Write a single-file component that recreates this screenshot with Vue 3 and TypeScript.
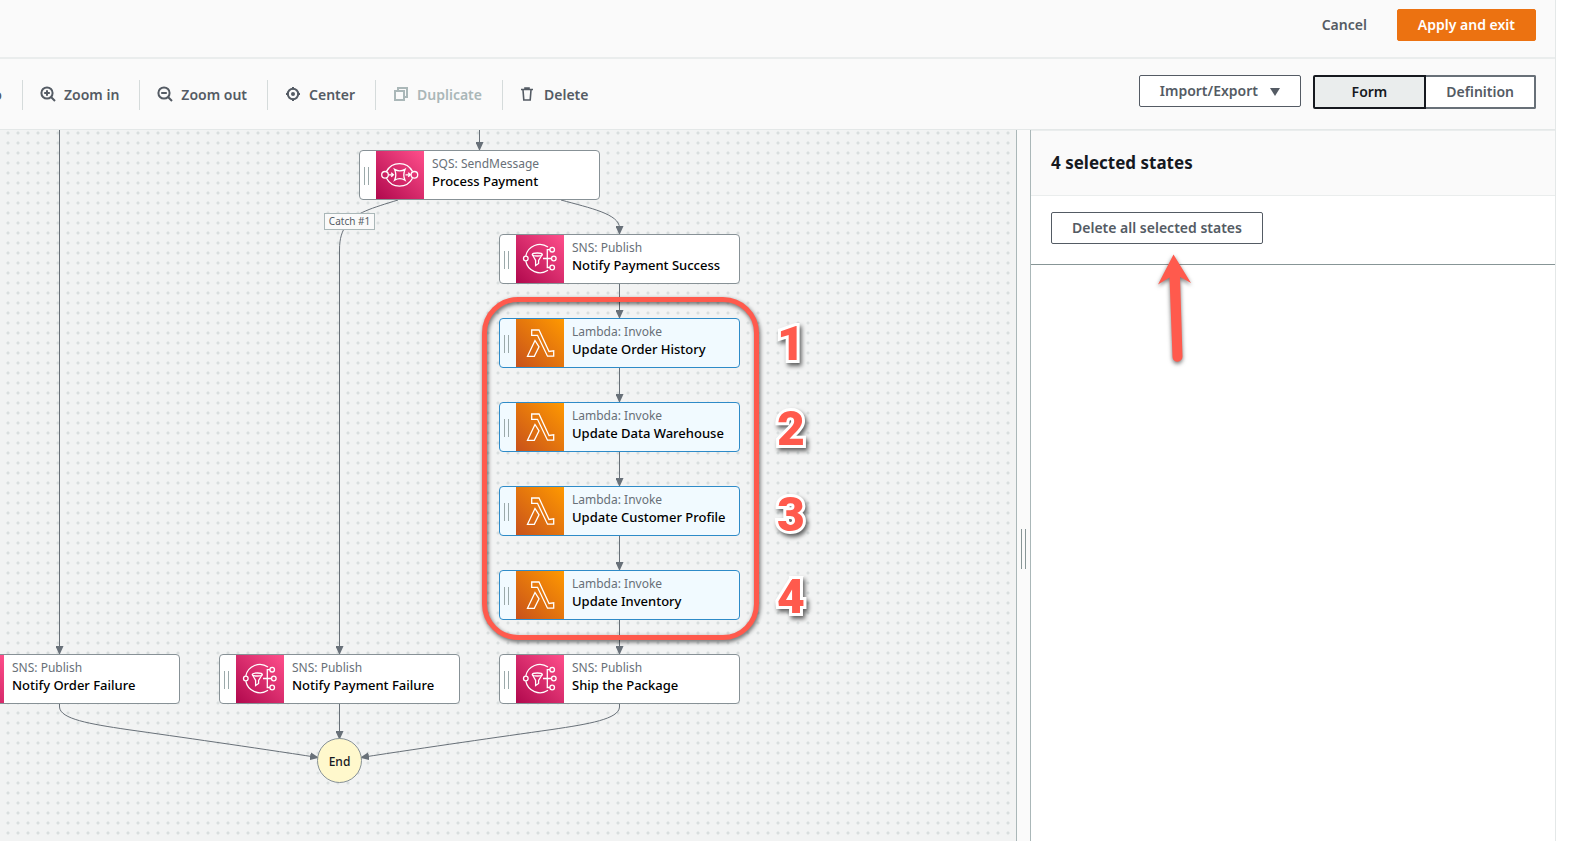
<script setup lang="ts">
type Service = 'sqs' | 'sns' | 'lambda'

interface StateNode {
  id: string
  service: Service
  action: string
  name: string
  x: number
  y: number
  selected?: boolean
}

const nodes: StateNode[] = [
  { id: 'pay', service: 'sqs', action: 'SQS: SendMessage', name: 'Process Payment', x: 359, y: 20 },
  { id: 'paid', service: 'sns', action: 'SNS: Publish', name: 'Notify Payment Success', x: 499, y: 104 },
  { id: 'history', service: 'lambda', action: 'Lambda: Invoke', name: 'Update Order History', x: 499, y: 188, selected: true },
  { id: 'warehouse', service: 'lambda', action: 'Lambda: Invoke', name: 'Update Data Warehouse', x: 499, y: 272, selected: true },
  { id: 'profile', service: 'lambda', action: 'Lambda: Invoke', name: 'Update Customer Profile', x: 499, y: 356, selected: true },
  { id: 'inventory', service: 'lambda', action: 'Lambda: Invoke', name: 'Update Inventory', x: 499, y: 440, selected: true },
  { id: 'ship', service: 'sns', action: 'SNS: Publish', name: 'Ship the Package', x: 499, y: 524 },
  { id: 'payfail', service: 'sns', action: 'SNS: Publish', name: 'Notify Payment Failure', x: 219, y: 524 },
  { id: 'orderfail', service: 'sns', action: 'SNS: Publish', name: 'Notify Order Failure', x: -61, y: 524 },
]

const edges: string[] = [
  'M59.5 0V524',
  'M479.5 0V20',
  'M398 70C372 78 355 83 347 94C342 101 339.5 108 339.5 120V524',
  'M561 70C590 78 619.5 84 619.5 98V104',
  'M619.5 154V188',
  'M619.5 238V272',
  'M619.5 322V356',
  'M619.5 406V440',
  'M619.5 490V524',
  'M339.5 574V609',
  'M59.5 574V577C60 589 90 594 127 599.5C180 607 250 617 318 627.5',
  'M619.5 574V577C619 589 589 594 552 599.5C499 607 429 617 361 627.5',
]

const callouts = [
  { label: '1', x: 777, y: 186 },
  { label: '2', x: 777, y: 271 },
  { label: '3', x: 777, y: 357 },
  { label: '4', x: 777, y: 439 },
]
</script>

<template>
  <div class="app">
    <div class="studio">
      <header class="header">
        <button class="btn link" type="button">Cancel</button>
        <button class="btn primary" type="button">Apply and exit</button>
      </header>

      <div class="toolbar">
        <div class="tools">
          <div class="clipped"><button class="tool-text" type="button">Redo</button></div>
          <button class="tool" type="button">
            <svg class="glyph" viewBox="0 0 16 16"><circle cx="7" cy="7" r="5.6" /><path d="M11 11l4 4M7 4.200v5.600M4.200 7h5.600" /></svg>
            Zoom in
          </button>
          <button class="tool" type="button">
            <svg class="glyph" viewBox="0 0 16 16"><circle cx="7" cy="7" r="5.6" /><path d="M11 11l4 4M4.200 7h5.600" /></svg>
            Zoom out
          </button>
          <button class="tool" type="button">
            <svg class="glyph" viewBox="0 0 16 16"><circle cx="8" cy="8" r="5.2" /><circle class="dot" cx="8" cy="8" r="2" /><path d="M8 1v2.500M8 12.500V15M1 8h2.500M12.500 8H15" /></svg>
            Center
          </button>
          <button class="tool" type="button" disabled>
            <svg class="glyph" viewBox="0 0 16 16"><path d="M2 5h9v9H2zM5 5V2h9v9h-3" /></svg>
            Duplicate
          </button>
          <button class="tool" type="button">
            <svg class="glyph thin" viewBox="0 0 16 16"><path d="M1 3.500h12M5 3V2h4v1M3 4l.8 10h6.400L11 4" /></svg>
            Delete
          </button>
        </div>
        <div class="views">
          <button class="btn normal" type="button">
            Import/Export
            <svg class="caret" viewBox="0 0 10 8"><path d="M0 0h10L5 8z" /></svg>
          </button>
          <div class="segments">
            <button class="segment active" type="button" aria-pressed="true">Form</button>
            <button class="segment" type="button" aria-pressed="false">Definition</button>
          </div>
        </div>
      </div>

      <div class="workspace">
        <main class="canvas">
          <svg class="edges">
            <defs>
              <marker id="arrow" markerWidth="10" markerHeight="8" refX="8" refY="4" orient="auto" markerUnits="userSpaceOnUse">
                <path d="M0 0L9 4L0 8z" fill="#687078" />
              </marker>
            </defs>
            <path v-for="d in edges" :key="d" :d="d" marker-end="url(#arrow)" />
          </svg>

          <div
            v-for="n in nodes"
            :key="n.id"
            class="node"
            :class="{ selected: n.selected }"
            :style="{ left: n.x + 'px', top: n.y + 'px' }"
          >
            <span class="grip"></span>
            <span class="service" :class="n.service">
              <svg v-if="n.service === 'lambda'" viewBox="0 0 48 48">
                <path d="M15.700 11H23L33 32.500l4.700-.7v5.400H31.500L21.500 16.300h-5.800zM19 21.500L11.500 37.300h6.800L23 27.800z" />
              </svg>
              <svg v-else-if="n.service === 'sns'" viewBox="0 0 48 48">
                <path d="M9.800 20.800A14.400 14.400 0 0 1 32 12M9.800 26.200A14.400 14.400 0 0 0 32 35.300" />
                <circle cx="9.800" cy="23.500" r="2.300" />
                <circle cx="36.200" cy="14.700" r="2.300" />
                <circle cx="37.800" cy="23.500" r="2.300" />
                <circle cx="36.200" cy="32.500" r="2.300" />
                <path d="M33.900 14.700h-2.600v17.800h2.600M27 23.500h8.500" />
                <ellipse cx="21.300" cy="19.500" rx="5" ry="1.500" />
                <path d="M16.300 19.500l3.300 6v5l3-2v-3l3.700-6" />
              </svg>
              <svg v-else viewBox="0 0 48 48">
                <path d="M10.500 20.400A14.700 14.700 0 0 1 36.500 20.400M10.500 27.200A14.700 14.700 0 0 0 36.500 27.200" />
                <circle cx="9" cy="23.800" r="3.300" />
                <circle cx="38.400" cy="23.800" r="3.300" />
                <path d="M18.600 18.400q5.200 3 10.400 0q-2.400 5.400 0 10.800q-5.200-3-10.400 0q2.400-5.400 0-10.800z" />
                <path d="M12.500 23.800h4.500M15.200 21.800l2.200 2l-2.200 2M29.500 23.800h4.500M32.200 21.800l2.200 2l-2.200 2" />
              </svg>
            </span>
            <span class="text">
              <span class="action">{{ n.action }}</span>
              <span class="name">{{ n.name }}</span>
            </span>
          </div>

          <span class="catch">Catch #1</span>
          <span class="end">End</span>
          <span class="highlight"></span>
          <span
            v-for="c in callouts"
            :key="c.label"
            class="callout"
            :style="{ left: c.x + 'px', top: c.y + 'px' }"
          >{{ c.label }}</span>
        </main>

        <div class="splitter"><span class="splitter-grip"></span></div>

        <aside class="panel">
          <div class="panel-head"><h2>4 selected states</h2></div>
          <div class="panel-body">
            <button class="btn normal" type="button">Delete all selected states</button>
          </div>
          <svg class="pointer" viewBox="0 0 48 124">
            <path d="M18.500 4.500L36 33L25 27L27.500 106.500a5 5 0 0 1-10 .4L14.500 27.500L3 34.500z" />
          </svg>
        </aside>
      </div>
    </div>
  </div>
</template>

<style>
body {
  margin: 0;
  background: #fff;
}
</style>

<style scoped>
.app {
  box-sizing: border-box;
  height: 100vh;
  padding-right: 24px;
  font-family: "Noto Sans", "Open Sans", sans-serif;
  font-size: 14px;
  color: #16191f;
  overflow: hidden;
}
.studio {
  display: flex;
  flex-direction: column;
  height: 100%;
  border-right: 1px solid #e4e8e8;
}
button {
  font: inherit;
  font-weight: 600;
  color: #545b64;
  background: none;
  border: 0;
  margin: 0;
  padding: 0;
  white-space: nowrap;
}
.header {
  display: flex;
  justify-content: flex-end;
  padding: 9px 19px 16px 0;
  background: #fafafa;
  border-bottom: 2px solid #eaeded;
}
.btn {
  box-sizing: border-box;
  height: 32px;
  padding: 0 20px;
  border: 1px solid transparent;
  border-radius: 2px;
  line-height: 20px;
}
.link {
  padding: 0 29px;
}
.primary {
  background: #ec7211;
  border-color: #ec7211;
  color: #fff;
}
.normal {
  background: #fff;
  border-color: #545b64;
}
.toolbar {
  display: flex;
  justify-content: space-between;
  align-items: flex-start;
  height: 70px;
  padding-right: 19px;
  background: #fafafa;
  border-bottom: 1px solid #e4e8e8;
}
.tools {
  display: flex;
  margin-top: 21px;
}
.clipped {
  display: flex;
  justify-content: flex-end;
  width: 22px;
  overflow: hidden;
}
.tool-text {
  padding: 0 20px 2px 0;
}
.tool {
  box-sizing: border-box;
  display: flex;
  align-items: center;
  gap: 8px;
  height: 30px;
  padding: 0 20px 2px 17px;
  border-left: 1px solid #d5dbdb;
}
.tool:disabled {
  color: #aab7b8;
}
.glyph {
  width: 16px;
  height: 16px;
  fill: none;
  stroke: currentColor;
  stroke-width: 2;
}
.glyph.thin {
  stroke-width: 1.6;
}
.glyph .dot {
  fill: currentColor;
  stroke: none;
}
.views {
  display: flex;
  gap: 12px;
  margin-top: 16px;
}
.caret {
  width: 10px;
  height: 8px;
  margin-left: 8px;
  fill: #545b64;
}
.segments {
  display: flex;
}
.segment {
  box-sizing: border-box;
  height: 34px;
  padding: 0 20px 2px;
  background: #fff;
  border: 2px solid #687078;
  border-left: 0;
  border-radius: 0 2px 2px 0;
}
.segment.active {
  padding: 0 37px 2px;
  background: #eaeded;
  border: 2px solid #16191f;
  border-radius: 2px 0 0 2px;
  color: #16191f;
}
.workspace {
  display: flex;
  flex: 1;
  min-height: 0;
}
.canvas {
  position: relative;
  flex: 1;
  min-width: 0;
  overflow: hidden;
  background-color: #f2f3f3;
  background-image: radial-gradient(circle at 5px 5px, #d9dede 1px, transparent 2px);
  background-size: 10px 10px;
  background-position: 3px -2px;
}
.edges {
  position: absolute;
  inset: 0;
  width: 100%;
  height: 100%;
  fill: none;
  stroke: #687078;
  stroke-width: 1;
}
.edges marker path {
  stroke: none;
}
.node {
  position: absolute;
  box-sizing: border-box;
  display: flex;
  width: 241px;
  height: 50px;
  background: #fff;
  border: 1px solid #879196;
  border-radius: 4px;
}
.node.selected {
  background: #f1faff;
  border-color: #2e8bc8;
}
.grip {
  box-sizing: border-box;
  width: 5px;
  height: 18px;
  margin: 16px 7px 0 4px;
  border: solid #9ba9aa;
  border-width: 0 1px;
}
.service {
  width: 48px;
  height: 48px;
}
.service svg {
  display: block;
  width: 48px;
  height: 48px;
  fill: none;
  stroke: #fff;
  stroke-width: 1.3;
}
.sqs,
.sns {
  background: linear-gradient(45deg, #b0084d, #ff4f8b);
}
.lambda {
  background: linear-gradient(45deg, #c8511b, #ff9900);
}
.text {
  display: flex;
  flex-direction: column;
  padding: 4px 0 0 8px;
  white-space: nowrap;
}
.action {
  font-size: 12px;
  line-height: 18px;
  color: #687078;
}
.name {
  font-size: 13px;
  font-weight: 500;
  line-height: 17px;
  color: #000;
}
.catch {
  position: absolute;
  left: 324px;
  top: 83px;
  box-sizing: border-box;
  width: 51px;
  height: 17px;
  border: 1px solid #aab7b8;
  background: #fafafa;
  font-size: 10px;
  line-height: 15px;
  text-align: center;
  color: #545b64;
}
.end {
  position: absolute;
  left: 317px;
  top: 608px;
  box-sizing: border-box;
  width: 45px;
  height: 45px;
  border: 1px solid #879196;
  border-radius: 50%;
  background: #fff8cc;
  font-size: 12px;
  font-weight: 500;
  line-height: 46px;
  text-align: center;
}
.highlight {
  position: absolute;
  left: 482px;
  top: 167px;
  box-sizing: border-box;
  width: 277px;
  height: 343px;
  border: 5px solid #ff5a4d;
  border-radius: 36px;
  filter: drop-shadow(1px 2px 2px rgba(0, 0, 0, 0.6));
}
.callout {
  position: absolute;
  font-family: Roboto, "Liberation Sans", sans-serif;
  font-size: 48px;
  font-weight: 900;
  line-height: 56px;
  color: #ff5a4d;
  -webkit-text-stroke: 6px #fff;
  stroke-linejoin: round;
  paint-order: stroke fill;
  filter: drop-shadow(2px 3px 2px rgba(0, 0, 0, 0.6));
}
.splitter {
  display: flex;
  align-items: center;
  justify-content: center;
  width: 13px;
  background: #fafafa;
  border: solid #aab7b8;
  border-width: 0 1px;
}
.splitter-grip {
  width: 3px;
  height: 40px;
  margin-top: 126px;
  border: solid #879596;
  border-width: 0 1px;
}
.panel {
  position: relative;
  width: 524px;
  background: #fff;
}
.panel-head {
  padding: 20px;
  background: #fafafa;
  border-top: 1px solid #eaeded;
  border-bottom: 1px solid #eaeded;
}
.panel-head h2 {
  margin: 0;
  font-size: 17px;
  line-height: 24px;
}
.panel-body {
  padding: 16px 20px 20px;
  border-bottom: 1px solid #879596;
}
.pointer {
  position: absolute;
  left: 124px;
  top: 120px;
  width: 48px;
  height: 124px;
  overflow: visible;
  fill: #ff5a4d;
  filter: drop-shadow(0 2px 2px rgba(0, 0, 0, 0.55));
}
</style>
